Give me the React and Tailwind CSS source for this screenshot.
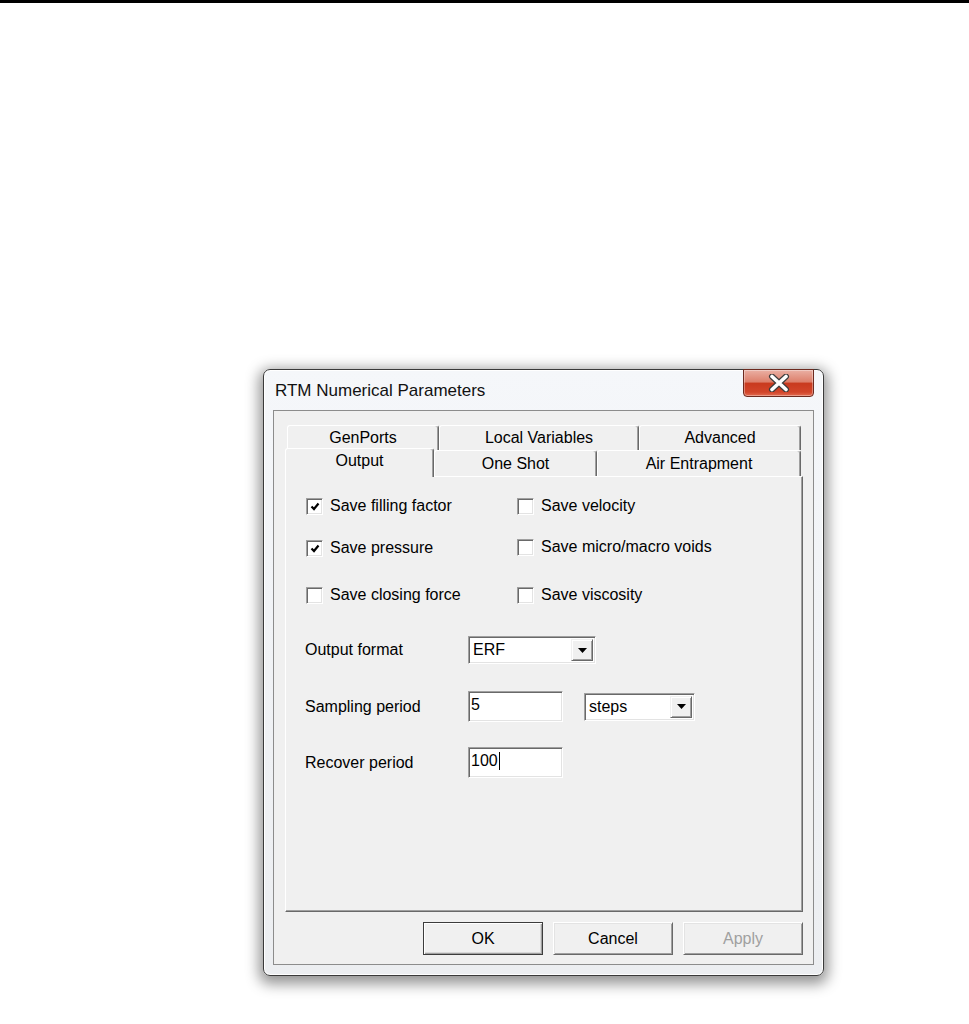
import React from 'react';

const sunken =
  'bg-white border border-t-[#a0a0a0] border-l-[#a0a0a0] border-b-white border-r-white shadow-[inset_1px_1px_0_#696969,inset_-1px_-1px_0_#e3e3e3]';

function CheckBox({ checked, label }) {
  return (
    <div className="flex items-center h-[20px]">
      <div className={`w-[17px] h-[17px] flex items-center justify-center ${sunken}`}>
        {checked && (
          <svg width="10" height="9" viewBox="0 0 10 9">
            <path d="M1.5 4.5 L4 7 L8.5 1.5" fill="none" stroke="#000" strokeWidth="2.2" />
          </svg>
        )}
      </div>
      <span className="ml-[7px] text-[16px] leading-[20px] text-black">{label}</span>
    </div>
  );
}

function DropArrow() {
  return (
    <div className="w-[22px] h-full bg-[#f0f0f0] border border-t-[#f0f0f0] border-l-[#f0f0f0] border-b-[#696969] border-r-[#696969] shadow-[inset_1px_1px_0_#fff,inset_-1px_-1px_0_#a0a0a0] flex items-center justify-center">
      <svg width="9" height="5" viewBox="0 0 9 5">
        <path d="M0 0 H9 L4.5 5 Z" fill="#000" />
      </svg>
    </div>
  );
}

function Combo({ value, width }) {
  return (
    <div className={`${width} h-[28px] flex p-[2px] ${sunken}`}>
      <div className="flex-1 pl-[2px] flex items-center text-[16px] leading-[20px]">{value}</div>
      <DropArrow />
    </div>
  );
}

function TextBox({ value, caret }) {
  return (
    <div className={`w-[95px] h-[31px] flex items-center pl-[2px] pb-[3px] text-[16px] leading-[20px] ${sunken}`}>
      <span>{value}</span>
      {caret && <span className="ml-[1px] w-[1px] h-[18px] bg-black" />}
    </div>
  );
}

function BackTab({ label, width }) {
  return (
    <div
      className={`${width} h-[25px] flex items-center justify-center text-[16px] bg-[#f0f0f0] rounded-t-[3px] border-t border-l border-r border-t-white border-l-white border-r-[#696969] shadow-[inset_-1px_0_0_#a0a0a0]`}
    >
      {label}
    </div>
  );
}

function Button({ label, disabled, isDefault }) {
  return (
    <button
      type="button"
      className={`w-[120px] h-[33px] bg-[#f0f0f0] text-[16px] border ${
        isDefault
          ? 'border-[#3c3c3c] shadow-[inset_1px_1px_0_#fff,inset_-1px_-1px_0_#a0a0a0,inset_-2px_-2px_0_#d8d8d8]'
          : 'border-t-white border-l-white border-b-[#696969] border-r-[#696969] shadow-[inset_1px_1px_0_#e3e3e3,inset_-1px_-1px_0_#a0a0a0]'
      } ${disabled ? 'text-[#a0a0a0]' : 'text-black'}`}
    >
      {label}
    </button>
  );
}

export default function App() {
  return (
    <div className="min-h-screen bg-white font-['Liberation_Sans',Arial,sans-serif] text-black">
      <div className="h-[3px] bg-black" />

      {/* Dialog window */}
      <div className="ml-[263px] mt-[366px] w-[561px] h-[607px] rounded-[7px] border border-[#3a3a3a] bg-gradient-to-b from-[#f5f7fa] via-[#f0f2f5] to-[#eceef1] shadow-[0_4px_14px_4px_rgba(0,0,0,0.42),inset_0_0_0_1px_#ffffff] px-[9px] pb-[10px] flex flex-col">
        {/* Title bar */}
        <div className="h-[40px] flex items-start justify-between">
          <div className="pl-[2px] pt-[11px] text-[17px] leading-[20px] text-[#111]">RTM Numerical Parameters</div>
          <div className="w-[71px] h-[28px] -mt-[1px] rounded-b-[4px] border border-[#6d2a1f] bg-[linear-gradient(180deg,#eab0a4_0%,#dd806c_45%,#c93a1e_52%,#d2452a_85%,#e26b50_100%)] shadow-[inset_0_0_0_1px_rgba(255,255,255,0.35)] flex items-center justify-center">
            <svg width="22" height="18" viewBox="0 0 22 18">
              <path d="M4 2.5 L18 15.5 M18 2.5 L4 15.5" stroke="#3d3d3d" strokeWidth="6" strokeLinecap="round" />
              <path d="M4 2.5 L18 15.5 M18 2.5 L4 15.5" stroke="#ffffff" strokeWidth="3.6" strokeLinecap="round" />
            </svg>
          </div>
        </div>

        {/* Client area */}
        <div className="flex-1 bg-[#f0f0f0] border border-[#8c8c8c] pt-[14px] pl-[11px] pr-[10px] flex flex-col">
          {/* Tab control */}
          <div className="flex flex-col">
            <div className="flex ml-[2px]">
              <BackTab label="GenPorts" width="w-[152px]" />
              <BackTab label="Local Variables" width="w-[200px]" />
              <BackTab label="Advanced" width="w-[162px]" />
            </div>
            <div className="flex items-end h-[26px]">
              <div className="relative z-10 w-[149px] h-[29px] -mb-[1px] pb-[4px] flex items-center justify-center text-[16px] bg-[#f0f0f0] rounded-t-[3px] border-t border-l border-r border-t-white border-l-white border-r-[#696969] shadow-[inset_-1px_0_0_#a0a0a0]">
                Output
              </div>
              <BackTab label="One Shot" width="w-[163px] !h-[26px]" />
              <BackTab label="Air Entrapment" width="w-[204px] !h-[26px]" />
            </div>

            {/* Tab panel */}
            <div className="h-[436px] bg-[#f0f0f0] border border-t-white border-l-white border-r-[#696969] border-b-[#696969] shadow-[inset_-1px_-1px_0_#a0a0a0] pl-[20px] pt-[19px]">
              <div className="flex">
                <div className="w-[211px]">
                  <CheckBox checked label="Save filling factor" />
                  <div className="mt-[22px]">
                    <CheckBox checked label="Save pressure" />
                  </div>
                  <div className="mt-[27px]">
                    <CheckBox label="Save closing force" />
                  </div>
                </div>
                <div>
                  <CheckBox label="Save velocity" />
                  <div className="mt-[21px]">
                    <CheckBox label="Save micro/macro voids" />
                  </div>
                  <div className="mt-[28px]">
                    <CheckBox label="Save viscosity" />
                  </div>
                </div>
              </div>

              <div className="mt-[31px] flex items-center">
                <div className="w-[163px] -ml-[1px] text-[16px] leading-[20px]">Output format</div>
                <Combo value="ERF" width="w-[128px]" />
              </div>

              <div className="mt-[27px] flex items-center">
                <div className="w-[163px] -ml-[1px] text-[16px] leading-[20px]">Sampling period</div>
                <TextBox value="5" />
                <div className="ml-[21px]">
                  <Combo value="steps" width="w-[111px]" />
                </div>
              </div>

              <div className="mt-[25px] flex items-center">
                <div className="w-[163px] -ml-[1px] text-[16px] leading-[20px]">Recover period</div>
                <TextBox value="100" caret />
              </div>
            </div>
          </div>

          {/* Buttons */}
          <div className="mt-[10px] flex justify-end gap-[10px]">
            <Button label="OK" isDefault />
            <Button label="Cancel" />
            <Button label="Apply" disabled />
          </div>
        </div>
      </div>
    </div>
  );
}
